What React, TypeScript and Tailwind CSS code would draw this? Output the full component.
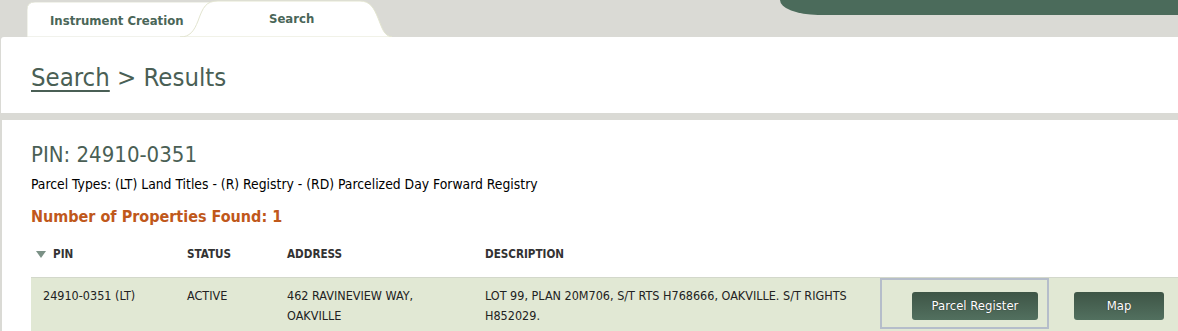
export default function App() {
  const font = { fontFamily: '"DejaVu Sans Condensed", "DejaVu Sans", sans-serif' };
  return (
    <div className="w-[1178px] h-[331px] overflow-hidden bg-[#dadad5] relative" style={font}>
      {/* top-right green bar */}
      <div className="absolute top-0 left-[780px] right-0 h-[15px] bg-[#4b6b5b] rounded-bl-[38px_15px]" />

      {/* tabs */}
      <div className="relative h-[37px]">
        <div className="absolute left-[27px] top-[2px] w-[200px] h-[35px]">
          <svg className="absolute inset-0" width="200" height="35" viewBox="0 0 200 35">
            <path d="M0 35 V8 Q0 0 8 0 H190 L190 35 Z" fill="#ffffff" stroke="#e3e5d8" strokeWidth="1" />
          </svg>
          <div className="relative pl-[23px] pt-[11px] text-[13px] font-bold text-[#4a6658] leading-[16px]">
            Instrument Creation
          </div>
        </div>
        <div className="absolute left-[180px] top-0 w-[212px] h-[37px]">
          <svg className="absolute inset-0" width="212" height="37" viewBox="0 0 212 37">
            <path
              d="M0 37 C10 37 14 31 18 21 C23 7 26 1 38 1 H180 C190 1 194 8 198 18 C202 28 204 36 212 37 Z"
              fill="#ffffff"
              stroke="#e3e5d0"
              strokeWidth="1"
            />
          </svg>
          <div className="relative pt-[11px] pl-[89px] text-[13px] font-bold text-[#4a6658] leading-[16px]">
            Search
          </div>
        </div>
      </div>

      {/* breadcrumb panel */}
      <div className="ml-px h-[76px] bg-white rounded-tl-[3px] flex items-center pl-[30px]">
        <div className="text-[25.5px] text-[#4a5f55] leading-none pt-[5px]">
          <span className="underline underline-offset-[4px] decoration-[2px]">Search</span> &gt; Results
        </div>
      </div>

      <div className="h-[7px]" />

      {/* results panel */}
      <div className="ml-[2px] bg-white h-[211px] pl-[29px]">
        <div className="pt-[23px] text-[22px] text-[#4a5f55] leading-[24px]">PIN: 24910-0351</div>
        <div className="mt-[9px] text-[13.8px] text-black leading-[16px]">
          Parcel Types: (LT) Land Titles - (R) Registry - (RD) Parcelized Day Forward Registry
        </div>
        <div className="mt-[16px] text-[16px] font-bold text-[#c0581b] leading-[18px]">
          Number of Properties Found: 1
        </div>

        <div className="mt-[7px] grid grid-cols-[144px_100px_198px_407px_169px_1fr] text-[11.6px] font-bold text-[#333] h-[44px] items-center">
          <div className="flex items-center pl-[5px] gap-[7px]">
            <svg width="10" height="7" viewBox="0 0 10 7">
              <path d="M0 0 H10 L5 7 Z" fill="#7b9186" />
            </svg>
            PIN
          </div>
          <div className="pl-[12px]">STATUS</div>
          <div className="pl-[12px]">ADDRESS</div>
          <div className="pl-[12px]">DESCRIPTION</div>
          <div />
          <div />
        </div>

        <div className="grid grid-cols-[144px_100px_198px_407px_169px_1fr] bg-[#e1e8d4] border-t border-[#d3d8cb] text-[12.5px] text-[#222] leading-[20px] h-[60px]">
          <div className="pl-[12px] pt-[8px]">24910-0351 (LT)</div>
          <div className="pl-[12px] pt-[8px]">ACTIVE</div>
          <div className="pl-[12px] pt-[8px]">
            462 RAVINEVIEW WAY,
            <br />
            OAKVILLE
          </div>
          <div className="pl-[12px] pt-[8px]">
            LOT 99, PLAN 20M706, S/T RTS H768666, OAKVILLE. S/T RIGHTS
            <br />
            H852029.
          </div>
          <div className="border-2 border-[#b5bdca] h-[51px] pl-[30px] pt-[12px]">
            <button className="w-[126px] h-[28px] rounded-[3px] bg-gradient-to-b from-[#3e5546] to-[#52705f] text-white text-[13px] leading-[28px] [text-shadow:0_0_1px_#222]">
              Parcel Register
            </button>
          </div>
          <div className="pl-[25px] pt-[14px]">
            <button className="w-[90px] h-[28px] rounded-[3px] bg-gradient-to-b from-[#3e5546] to-[#52705f] text-white text-[13px] leading-[28px] [text-shadow:0_0_1px_#222]">
              Map
            </button>
          </div>
        </div>
      </div>
    </div>
  );
}
